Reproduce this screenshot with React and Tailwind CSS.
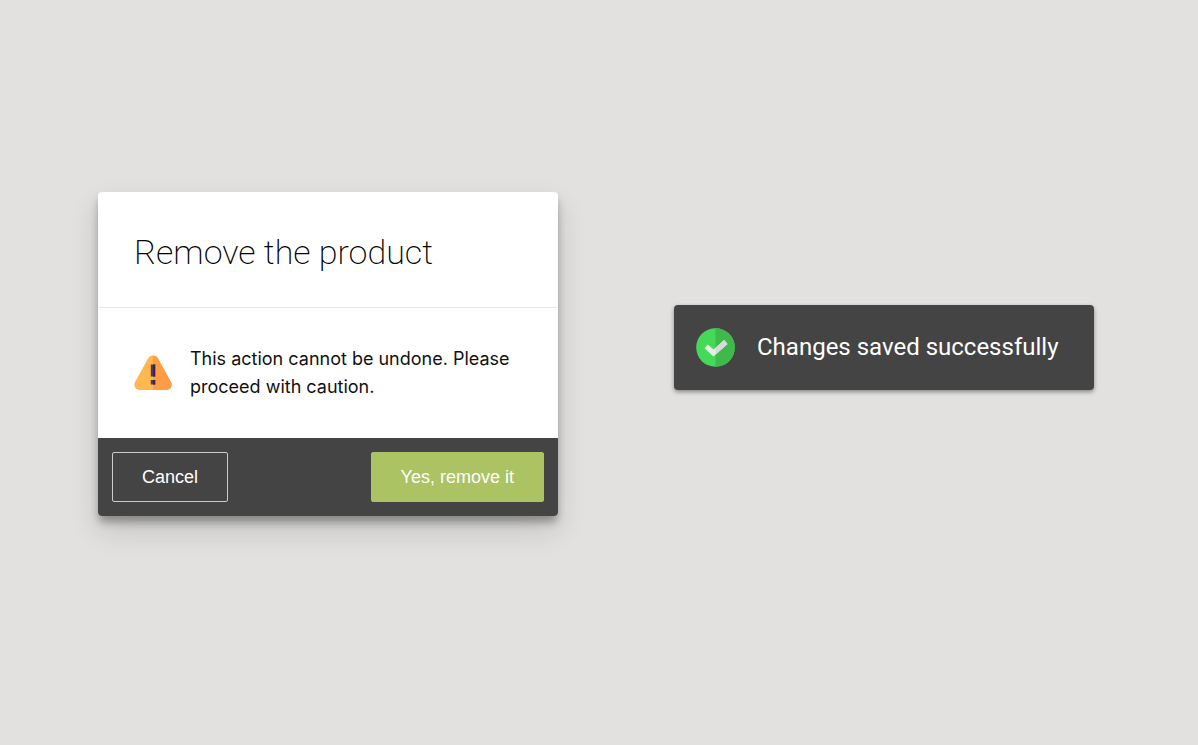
import React from "react";

function WarningIcon() {
  return (
    <svg viewBox="0 0 38 36" className="h-9 w-[38px] shrink-0" aria-hidden="true">
      <defs>
        <clipPath id="warning-right">
          <rect x="19" y="0" width="19" height="36" />
        </clipPath>
      </defs>
      <path
        d="M14.200 3.200C16.200-.4 21.800-.4 23.800 3.200L36.800 26.800C39 31 36.400 35 32 35H6C1.600 35-1 31 1.200 26.800Z"
        fill="#ffb74f"
      />
      <path
        d="M14.200 3.200C16.200-.4 21.800-.4 23.800 3.200L36.800 26.800C39 31 36.400 35 32 35H6C1.600 35-1 31 1.200 26.800Z"
        fill="#ff9c45"
        clipPath="url(#warning-right)"
      />
      <path d="M16.800 9.500h4.400v12h-4.400zM16.800 25h4.400v4.400h-4.400z" fill="#543a5c" />
      <path d="M19 9.500h2.200v12H19zM19 25h2.200v4.400H19z" fill="#3a264c" />
    </svg>
  );
}

function SuccessIcon() {
  return (
    <svg viewBox="0 0 39 39" className="h-[39px] w-[39px] shrink-0" aria-hidden="true">
      <circle cx="19.500" cy="19.500" r="19.300" fill="#44d958" />
      <path d="M19.500.2a19.300 19.300 0 0 1 0 38.600Z" fill="#3fb84c" />
      <path d="M8.500 20.200l3.300-3.800 5.800 5 10.500-9.300 3.400 3.900-14 12.500Z" fill="#e9edea" />
      <path d="M19.500 19.700l8.600-7.600 3.400 3.900-12 10.700Z" fill="#d8d9d8" />
    </svg>
  );
}

export default function App() {
  return (
    <main className="grid min-h-screen grid-cols-[460fr_420fr] items-start gap-x-[116px] bg-[#e2e1df] pt-48 pr-[104px] pb-12 pl-[98px] font-['Inter',sans-serif]">
      <section
        role="alertdialog"
        aria-labelledby="dialog-title"
        aria-describedby="dialog-text"
        className="overflow-hidden rounded bg-white shadow-[0_7px_9px_-1px_rgba(0,0,0,0.32),0_14px_30px_rgba(0,0,0,0.14)]"
      >
        <header className="border-b border-[#e8e8e8] px-9 pt-[38px] pb-[33px]">
          <h1 id="dialog-title" className="font-['Roboto',sans-serif] text-[34px] leading-[44px] font-extralight whitespace-nowrap text-black">
            Remove the product
          </h1>
        </header>
        <div className="flex items-center gap-[18px] px-9 py-[37px]">
          <WarningIcon />
          <p id="dialog-text" className="text-[18px] leading-7 text-[#111]">
            This action cannot be undone. Please proceed with caution.
          </p>
        </div>
        <footer className="flex items-center justify-between bg-[#444] p-3.5 font-['Liberation_Sans',sans-serif] text-[18px] text-white">
          <button type="button" className="h-[50px] rounded-xs border border-[#ccc] px-[29px]">
            Cancel
          </button>
          <button type="button" className="h-[50px] rounded-xs border border-[#abc363] bg-[#abc363] px-[29px]">
            Yes, remove it
          </button>
        </footer>
      </section>

      <div
        role="status"
        className="mt-[113px] flex items-center gap-[22px] rounded bg-[#444] px-[22px] py-[23px] shadow-[0_2px_4px_rgba(0,0,0,0.4)]"
      >
        <SuccessIcon />
        <p className="font-['Roboto',sans-serif] text-[24px] leading-[39px] whitespace-nowrap text-white">
          Changes saved successfully
        </p>
      </div>
    </main>
  );
}
